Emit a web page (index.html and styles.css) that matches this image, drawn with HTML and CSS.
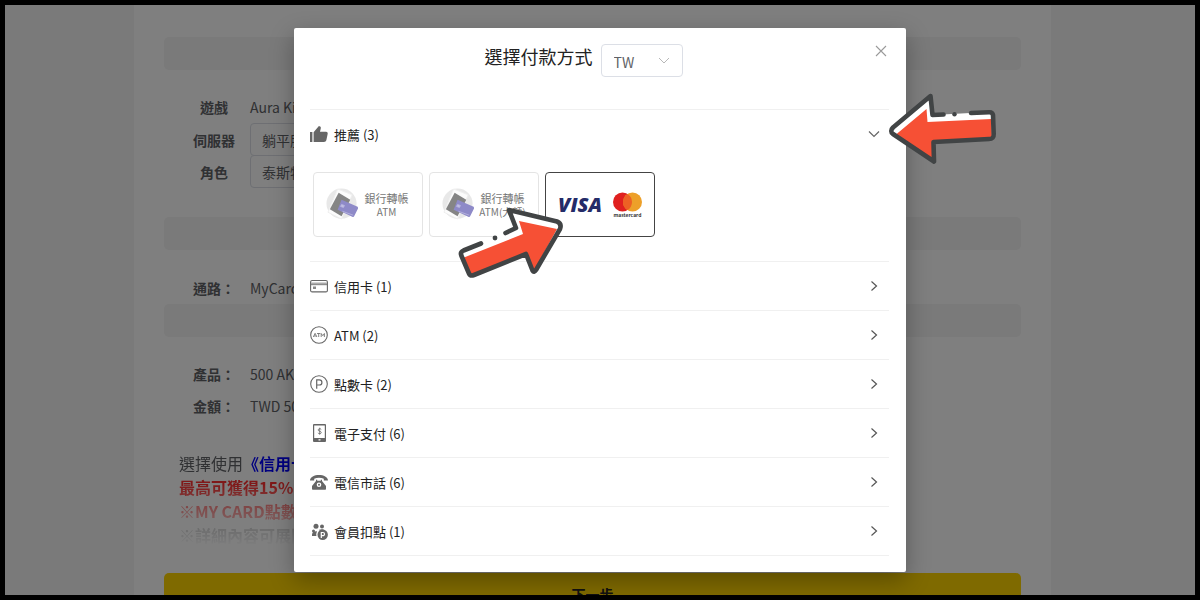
FILE: index.html
```html
<!DOCTYPE html>
<html lang="zh-Hant">
<head>
<meta charset="utf-8">
<meta name="viewport" content="width=device-width, initial-scale=1">
<title>選擇付款方式</title>
<link rel="stylesheet" href="styles.css">
</head>
<body>
<div class="frame">
  <main class="page">
    <div class="sheet">
      <div class="bar"></div>
      <div class="fields">
        <div class="field"><span class="field-name">遊戲</span><span>Aura Kingdom</span></div>
        <div class="field"><label class="field-name" for="server">伺服器</label><select class="field-select" id="server"><option>躺平服</option></select></div>
        <div class="field"><label class="field-name" for="role">角色</label><select class="field-select" id="role"><option>泰斯特</option></select></div>
      </div>
      <div class="bar bar-spaced"></div>
      <div class="fields">
        <div class="field"><span class="field-name">通路：</span><span>MyCard</span></div>
      </div>
      <div class="bar"></div>
      <div class="fields">
        <div class="field"><span class="field-name">產品：</span><span>500 AK</span></div>
        <div class="field"><span class="field-name">金額：</span><span>TWD 50</span></div>
      </div>
      <div class="promo">
        <div>選擇使用<span class="promo-blue">《信用卡》</span></div>
        <div class="promo-red">最高可獲得15%</div>
        <div class="promo-red">※MY CARD點數</div>
        <div class="promo-note">※詳細內容可展開</div>
      </div>
      <button class="next" type="button">下一步</button>
    </div>
  </main>

  <div class="overlay">
    <section class="modal" role="dialog" aria-labelledby="title">
      <header class="modal-head">
        <h1 class="title" id="title">選擇付款方式</h1>
        <div class="region">
          <select class="region-select" aria-label="地區"><option>TW</option></select>
          <svg class="region-arrow" viewBox="0 0 12 8" aria-hidden="true"><path d="M1 1l5 5 5-5" fill="none" stroke="#b8b8b8"/></svg>
        </div>
        <button class="close" type="button" aria-label="關閉"><svg viewBox="0 0 12 12" aria-hidden="true"><path d="M1 1l10 10M11 1L1 11" fill="none" stroke="#9a9a9a" stroke-width="1.1"/></svg></button>
      </header>

      <div class="group">
        <button class="row" type="button" aria-expanded="true">
          <svg class="icon" viewBox="0 0 18 18" aria-hidden="true"><path fill="#666" d="M0 7h2.4v10H0zM3.6 7.3L8.9 1l1.2.5c.6.3.9 1 .7 1.700L10 6.700h6.100c1 0 1.800.9 1.600 2L16.400 15c-.3 1.300-1.200 2-2.500 2H3.600z"/></svg>
          <span class="row-text">推薦 (3)</span>
          <svg class="chevron" viewBox="0 0 12 12" aria-hidden="true"><path d="M1 3.500l5 5 5-5" fill="none" stroke="#666" stroke-width="1.200"/></svg>
        </button>
        <div class="cards">
          <button class="card card-dim" type="button">
            <svg class="bank" viewBox="0 0 34 34" aria-hidden="true"><circle cx="16" cy="16" r="15.500" fill="#e8e8e8"/><path d="M12 1l15 6-11 25-14-7z" fill="#fcfcfc" stroke="#eee"/><path d="M13 5l12 7-9 17L4 22z" fill="#858585"/><path d="M16 12l16 7c1 .5 1 1 1 2l-4 8c-.5 1-1 1-2 .5l-15-7z" fill="#8e8ac8"/><path d="M16 17l3 1-1 2-3-1zM17 24l11 4" fill="#c6c5e4" stroke="#b4b1dd"/></svg>
            <span class="bank-text"><span class="bank-name">銀行轉帳</span><span>ATM</span></span>
          </button>
          <button class="card card-dim" type="button">
            <svg class="bank" viewBox="0 0 34 34" aria-hidden="true"><circle cx="16" cy="16" r="15.500" fill="#e8e8e8"/><path d="M12 1l15 6-11 25-14-7z" fill="#fcfcfc" stroke="#eee"/><path d="M13 5l12 7-9 17L4 22z" fill="#858585"/><path d="M16 12l16 7c1 .5 1 1 1 2l-4 8c-.5 1-1 1-2 .5l-15-7z" fill="#8e8ac8"/><path d="M16 17l3 1-1 2-3-1zM17 24l11 4" fill="#c6c5e4" stroke="#b4b1dd"/></svg>
            <span class="bank-text"><span class="bank-name">銀行轉帳</span><span>ATM(大額)</span></span>
          </button>
          <button class="card card-picked" type="button">
            <span class="visa">VISA</span>
            <span class="mastercard">
              <svg class="mc-logo" viewBox="0 0 29 20" aria-hidden="true"><circle cx="9.500" cy="10" r="9.500" fill="#e0201f"/><circle cx="19.500" cy="10" r="9.500" fill="#eda029"/><path d="M14.500 1.900a9.500 9.500 0 0 1 0 16.200 9.500 9.500 0 0 1 0-16.200z" fill="#ed6124"/></svg>
              <span>mastercard</span>
            </span>
          </button>
        </div>
      </div>

      <div class="group"><button class="row" type="button">
        <svg class="icon" viewBox="0 0 18 18" aria-hidden="true"><rect x=".6" y="3.500" width="16.800" height="11.400" rx="1.500" fill="none" stroke="#666" stroke-width="1.100"/><path d="M1 5.500h16v2H1z" fill="#aaa"/><path d="M1 7.700h16" stroke="#666" stroke-width=".8"/><path d="M3 9.500h3v2.500H3z" fill="#888"/></svg>
        <span class="row-text">信用卡 (1)</span>
        <svg class="chevron" viewBox="0 0 12 12" aria-hidden="true"><path d="M3.500 1.500l5 4.500-5 4.500" fill="none" stroke="#555" stroke-width="1.200"/></svg>
      </button></div>
      <div class="group"><button class="row" type="button">
        <svg class="icon" viewBox="0 0 18 18" aria-hidden="true"><circle cx="9" cy="9" r="8.300" fill="none" stroke="#666" stroke-width="1.100"/><path d="M3.300 11l1.800-3.700L6.900 11M4 10h2.200M7 7.500h3.300M8.700 7.500V11M11.200 11V7.500l1.600 2.200 1.600-2.200V11" fill="none" stroke="#666" stroke-width=".8"/></svg>
        <span class="row-text">ATM (2)</span>
        <svg class="chevron" viewBox="0 0 12 12" aria-hidden="true"><path d="M3.500 1.500l5 4.500-5 4.500" fill="none" stroke="#555" stroke-width="1.200"/></svg>
      </button></div>
      <div class="group"><button class="row" type="button">
        <svg class="icon" viewBox="0 0 18 18" aria-hidden="true"><circle cx="9" cy="9" r="8.300" fill="none" stroke="#666" stroke-width="1.100"/><path d="M6.700 13.800V4.800h2.600a2.600 2.600 0 0 1 0 5.200H6.700" fill="none" stroke="#666" stroke-width="1.200"/></svg>
        <span class="row-text">點數卡 (2)</span>
        <svg class="chevron" viewBox="0 0 12 12" aria-hidden="true"><path d="M3.500 1.500l5 4.500-5 4.500" fill="none" stroke="#555" stroke-width="1.200"/></svg>
      </button></div>
      <div class="group"><button class="row" type="button">
        <svg class="icon" viewBox="0 0 18 18" aria-hidden="true"><path fill="#666" fill-rule="evenodd" d="M4 0h11q1 0 1 1v16q0 1-1 1H4q-1 0-1-1V1q0-1 1-1zM4.200 1.500v12.500h10.600V1.500zM8.500 15.300v1.300h2v-1.300z"/><path d="M11.300 5.500c-.5-1-3.200-1-3.200.5s3.200 1 3.200 2.500-2.800 1.500-3.400.3M9.700 3.700v7" fill="none" stroke="#666" stroke-width=".8"/></svg>
        <span class="row-text">電子支付 (6)</span>
        <svg class="chevron" viewBox="0 0 12 12" aria-hidden="true"><path d="M3.500 1.500l5 4.500-5 4.500" fill="none" stroke="#555" stroke-width="1.200"/></svg>
      </button></div>
      <div class="group"><button class="row" type="button">
        <svg class="icon" viewBox="0 0 18 18" aria-hidden="true"><path d="M0 7.500C0 0 18 0 18 7.500h-4.200V5.700C11 4.500 7 4.500 4.200 5.700v1.800z" fill="#666"/><path fill="#666" fill-rule="evenodd" d="M6 6.700h1.200v1h3.600v-1H12v1.400l4 5V16q0 .7-.8.700H2.800Q2 16.700 2 16v-2.900l4-5zM9 9.500a2.300 2.300 0 1 0 0 4.600 2.300 2.300 0 0 0 0-4.600zM9 10.800a1 1 0 1 1 0 2 1 1 0 0 1 0-2z"/></svg>
        <span class="row-text">電信市話 (6)</span>
        <svg class="chevron" viewBox="0 0 12 12" aria-hidden="true"><path d="M3.500 1.500l5 4.500-5 4.500" fill="none" stroke="#555" stroke-width="1.200"/></svg>
      </button></div>
      <div class="group group-last"><button class="row" type="button">
        <svg class="icon" viewBox="0 0 18 18" aria-hidden="true"><g fill="#666"><circle cx="6" cy="4.300" r="2.500"/><circle cx="12" cy="4.500" r="2"/><circle cx="3.500" cy="9" r="1.500"/><path d="M2 14v-1.500Q2.500 9 7 9.300 6 11.500 6.400 14zM9 7.800q3-1 5.500 0-3 0-4.500 1.500z"/><circle cx="12.700" cy="12.700" r="5.200"/></g><path d="M11.300 16v-5.500h1.600a1.500 1.500 0 0 1 0 3.200h-1.600" fill="none" stroke="#fff" stroke-width="1.200"/></svg>
        <span class="row-text">會員扣點 (1)</span>
        <svg class="chevron" viewBox="0 0 12 12" aria-hidden="true"><path d="M3.500 1.500l5 4.500-5 4.500" fill="none" stroke="#555" stroke-width="1.200"/></svg>
      </button></div>

      <svg class="pointer pointer-group" viewBox="886 90 112 76" aria-hidden="true">
        <path d="M931 96L893 128Q890 131 893 134L935 162 934 142 990 139Q994 139 994 135L993 115Q993 112 989 112L933 115z" fill="#fff"/>
        <path d="M926.500 109L896 134.500 935 162 934 142 992 139 991.500 119 927.500 122z" fill="#f65035"/>
        <path d="M943.500 114.500L932.500 115 930.500 96 893 127.500Q889.500 131 893 134L934 161.500 933.500 142 989 139Q994 139 993.700 134L993 115Q992.500 112 989 112.200L971 113" fill="none" stroke="#414445" stroke-width="4.600" stroke-linecap="round" stroke-linejoin="round"/>
        <circle cx="954.500" cy="114.300" r="2.200" fill="#414445"/>
      </svg>
      <svg class="pointer pointer-card" viewBox="456 204 110 76" aria-hidden="true">
        <path d="M509 210L557 221Q561 223 560 228L534 272 526 254 474 275Q471 276 470 273L461 255Q460 252 463 250L516 228z" fill="#fff"/>
        <path d="M519 221L557 229 534 271 526 254 471 275 464 257.500 523 234z" fill="#f65035"/>
        <path d="M481 243.500L463.500 250.500Q460 252 461.300 255.500L469 273.500Q470.300 276.500 474 275L526 254 532.500 270.500Q534 273 536 270L560 229Q562 223.500 557 221.500L509 210 516 228 505.500 233" fill="none" stroke="#414445" stroke-width="4.600" stroke-linecap="round" stroke-linejoin="round"/>
        <circle cx="495" cy="238" r="2.400" fill="#414445"/>
      </svg>
    </section>
  </div>
</div>
</body>
</html>
```
FILE: styles.css
```css
* { box-sizing: border-box; }

body {
  margin: 0;
  font-family: "Noto Sans CJK TC", "Noto Sans", sans-serif;
  font-size: 14px;
  color: #606266;
}

button, select { font: inherit; color: inherit; }
button { cursor: pointer; }

.frame {
  position: relative;
  height: 100vh;
  border: 5px solid #000;
  overflow: hidden;
}

.page {
  min-height: 100%;
  padding-right: 15px;
  background: #f4f4f4;
}

.sheet {
  max-width: 917px;
  margin: 0 auto;
  padding: 32px 30px;
  background: #fff;
}

.bar {
  height: 33px;
  border-radius: 5px;
  background: #f4f4f4;
}
.bar-spaced { margin-top: 30px; }

.fields { padding: 21px 28px 0; }

.field {
  display: grid;
  grid-template-columns: 44px 1fr;
  column-gap: 14px;
  align-items: center;
  height: 32px;
}
.bar-spaced + .fields { padding-top: 22px; }
.field-name {
  font-weight: 700;
  color: #606266;
  text-align: center;
  white-space: nowrap;
}
.field-select {
  width: 220px;
  height: 33px;
  padding: 0 11px;
  appearance: none;
  border: 1px solid #dcdfe6;
  border-radius: 4px;
  background: #fff;
}

.promo {
  padding: 29px 15px 0;
  font-size: 16px;
  line-height: 24px;
  mask-image: linear-gradient(#000 50%, rgba(0, 0, 0, 0.5) 70%, transparent 100%);
}
.promo-blue { color: #00f; font-weight: 700; }
.promo-red { color: #f33; font-weight: 700; }
.promo-note { font-weight: 700; }

.next {
  display: block;
  width: 100%;
  height: 42px;
  margin-top: 26px;
  border: 0;
  border-radius: 5px;
  background: #ffd500;
  color: #222;
  font-weight: 700;
}

.overlay {
  position: absolute;
  inset: 0;
  display: flex;
  align-items: center;
  justify-content: center;
  background: rgba(0, 0, 0, 0.5);
}

.modal {
  position: relative;
  width: 100%;
  max-width: 612px;
  padding: 0 17px 16px 16px;
  border-radius: 2px;
  background: #fff;
  color: #222;
  box-shadow: 0 8px 24px rgba(0, 0, 0, 0.3);
}

.modal-head {
  display: flex;
  justify-content: center;
  gap: 8px;
  height: 81px;
  padding: 16px 32px 0 0;
}
.title {
  margin: 0;
  font-size: 18px;
  font-weight: 400;
  line-height: 24px;
}
.region { position: relative; }
.region-select {
  display: block;
  width: 82px;
  height: 33px;
  padding: 2px 12px 0;
  appearance: none;
  border: 1px solid #dcdfe6;
  border-radius: 4px;
  background: #fff;
  color: #606266;
}
.region-arrow {
  position: absolute;
  top: 13px;
  right: 13px;
  width: 12px;
  height: 8px;
  pointer-events: none;
}
.close {
  position: absolute;
  top: 17px;
  right: 19px;
  display: flex;
  width: 12px;
  height: 12px;
  padding: 0;
  border: 0;
  background: none;
}
.close svg { width: 12px; height: 12px; }

.group { border-top: 1px solid #f0f0f0; }
.group-last { border-bottom: 1px solid #f0f0f0; }

.row {
  display: flex;
  align-items: center;
  gap: 6px;
  width: 100%;
  height: 48px;
  padding: 0 9px 0 0;
  border: 0;
  background: none;
  font-size: 13px;
  text-align: left;
}
.row-text { flex: 1; }
.icon { width: 18px; height: 18px; }
.chevron { width: 12px; height: 12px; }

.cards {
  display: flex;
  gap: 6px;
  padding: 14px 3px 24px;
}
.card {
  display: flex;
  align-items: center;
  justify-content: center;
  gap: 4px;
  width: 110px;
  height: 65px;
  padding: 0;
  border: 1px solid #e4e4e4;
  border-radius: 4px;
  background: #fff;
}
.card-dim { color: #777; }
.card-picked {
  gap: 11px;
  border-color: #444;
}
.bank { width: 33px; height: 33px; }
.bank-text {
  display: flex;
  flex-direction: column;
  align-items: center;
  width: 48px;
  font-size: 10px;
  line-height: 13px;
  white-space: nowrap;
}
.bank-name {
  display: block;
  font-size: 11px;
}
.visa {
  font-family: "Open Sans", sans-serif;
  font-size: 20px;
  font-style: italic;
  font-weight: 800;
  color: #242b68;
}
.mastercard {
  display: flex;
  flex-direction: column;
  align-items: center;
  font-size: 5px;
  font-weight: 700;
  line-height: 6px;
  color: #333;
}
.mc-logo { width: 29px; height: 20px; }

.pointer {
  position: absolute;
  pointer-events: none;
}
.pointer-group { top: 62px; left: 592px; width: 112px; height: 76px; }
.pointer-card { top: 176px; left: 162px; width: 110px; height: 76px; }
```
